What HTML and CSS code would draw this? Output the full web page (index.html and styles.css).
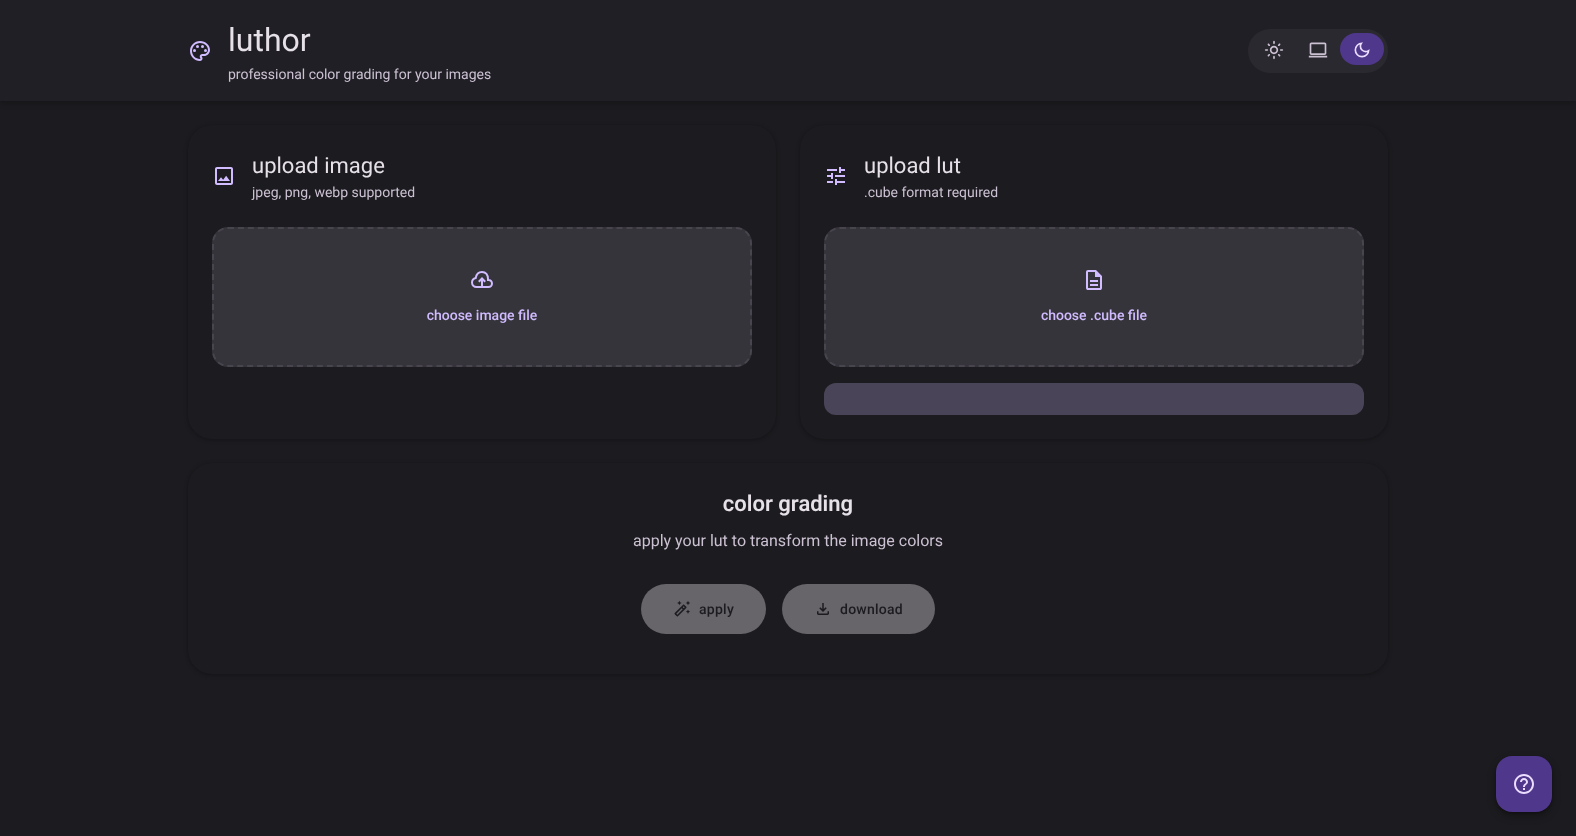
FILE: index.html
```html
<!DOCTYPE html>
<html>
  <head>
    <title>luthor</title>
    <link rel="stylesheet" href="styles.css">
  </head>
  <body>
    <header class="topbar">
      <div class="topbar-inner">
        <div class="brand">
          <svg class="icon icon-accent" viewBox="0 0 24 24"><path d="M12 22C6.49 22 2 17.51 2 12S6.49 2 12 2s10 4.04 10 9c0 3.31-2.69 6-6 6h-1.77c-.28 0-.5.22-.5.5 0 .12.05.23.13.33.41.47.64 1.06.64 1.67 0 1.38-1.12 2.5-2.5 2.5zm0-18c-4.41 0-8 3.59-8 8s3.59 8 8 8c.28 0 .5-.22.5-.5 0-.16-.08-.28-.14-.35-.41-.46-.63-1.05-.63-1.65 0-1.38 1.12-2.5 2.5-2.5H16c2.21 0 4-1.79 4-4 0-3.86-3.59-7-8-7z"/><circle cx="6.5" cy="11.5" r="1.5"/><circle cx="9.5" cy="7.5" r="1.5"/><circle cx="14.5" cy="7.5" r="1.5"/><circle cx="17.5" cy="11.5" r="1.5"/></svg>
          <div class="brand-text">
            <h1 class="brand-name">luthor</h1>
            <p class="brand-sub">professional color grading for your images</p>
          </div>
        </div>
        <div class="theme-switch">
          <button class="theme-btn">
            <svg class="icon-small" viewBox="0 0 24 24"><path d="M12 9c1.65 0 3 1.35 3 3s-1.35 3-3 3-3-1.35-3-3 1.35-3 3-3m0-2c-2.76 0-5 2.24-5 5s2.24 5 5 5 5-2.24 5-5-2.24-5-5-5zM2 13h2c.55 0 1-.45 1-1s-.45-1-1-1H2c-.55 0-1 .45-1 1s.45 1 1 1zm18 0h2c.55 0 1-.45 1-1s-.45-1-1-1h-2c-.55 0-1 .45-1 1s.45 1 1 1zM11 2v2c0 .55.45 1 1 1s1-.45 1-1V2c0-.55-.45-1-1-1s-1 .45-1 1zm0 18v2c0 .55.45 1 1 1s1-.45 1-1v-2c0-.55-.45-1-1-1s-1 .45-1 1zM5.99 4.58c-.39-.39-1.03-.39-1.41 0-.39.39-.39 1.03 0 1.41l1.06 1.06c.39.39 1.03.39 1.41 0s.39-1.03 0-1.41L5.99 4.58zm12.37 12.37c-.39-.39-1.03-.39-1.41 0-.39.39-.39 1.03 0 1.41l1.06 1.06c.39.39 1.03.39 1.41 0 .39-.39.39-1.03 0-1.41l-1.06-1.06zm1.06-10.96c.39-.39.39-1.03 0-1.41-.39-.39-1.03-.39-1.41 0l-1.06 1.06c-.39.39-.39 1.03 0 1.41s1.03.39 1.41 0l1.06-1.06zM7.05 18.36c.39-.39.39-1.03 0-1.41-.39-.39-1.03-.39-1.41 0l-1.06 1.06c-.39.39-.39 1.03 0 1.41s1.03.39 1.41 0l1.06-1.06z"/></svg>
          </button>
          <button class="theme-btn">
            <svg class="icon-small" viewBox="0 0 24 24"><path d="M1 21v-2h22v2H1Zm3-3q-.82 0-1.41-.59Q2 16.82 2 16V5q0-.82.59-1.41Q3.18 3 4 3h16q.82 0 1.41.59T22 5v11q0 .82-.59 1.41Q20.83 18 20 18H4Zm0-2h16V5H4v11Z"/></svg>
          </button>
          <button class="theme-btn theme-btn-on">
            <svg class="icon-small" viewBox="0 0 24 24"><path d="M12 21q-3.75 0-6.38-2.63Q3 15.75 3 12q0-3.75 2.63-6.38Q8.25 3 12 3q.35 0 .69.03.34.02.66.07-1.03.72-1.64 1.88Q11.1 6.15 11.1 7.5q0 2.25 1.58 3.82Q14.25 12.9 16.5 12.9q1.38 0 2.53-.61 1.15-.6 1.87-1.64.05.33.08.66.02.34.02.69 0 3.75-2.63 6.38Q15.75 21 12 21Zm0-2q2.2 0 3.95-1.21 1.75-1.22 2.55-3.17-.5.13-1 .2-.5.08-1 .08-3.08 0-5.24-2.16Q9.1 10.58 9.1 7.5q0-.5.08-1 .07-.5.2-1-1.95.8-3.17 2.55Q5 9.8 5 12q0 2.9 2.05 4.95Q9.1 19 12 19Z"/></svg>
          </button>
        </div>
      </div>
    </header>

    <main class="content">
      <div class="upload-row">
        <section class="card">
          <div class="card-head">
            <svg class="icon icon-accent" viewBox="0 0 24 24"><path d="M19 5v14H5V5h14m0-2H5c-1.1 0-2 .9-2 2v14c0 1.1.9 2 2 2h14c1.1 0 2-.9 2-2V5c0-1.1-.9-2-2-2zm-4.86 8.86l-3 3.87L9 13.14 6 17h12l-3.86-5.14z"/></svg>
            <div class="card-text">
              <h2 class="card-title">upload image</h2>
              <p class="card-sub">jpeg, png, webp supported</p>
            </div>
          </div>
          <div class="dropzone">
            <svg class="icon icon-accent icon-line" viewBox="0 0 24 24"><path d="M6.5 19C4 19 2 17 2 14.6c0-2.2 1.5-4 3.7-4.5C6.3 6.4 8.9 4 12 4c3.8 0 6 3 6 7v1h.5c2 0 3.5 1.6 3.5 3.5S20.5 19 18.5 19H6.5Z"/><path d="M12 19v-8.5M8.8 13.7l3.2-3.2 3.2 3.2"/></svg>
            <span class="dropzone-label">choose image file</span>
          </div>
        </section>

        <section class="card">
          <div class="card-head">
            <svg class="icon icon-accent" viewBox="0 0 24 24"><path d="M3 17v2h6v-2H3zM3 5v2h10V5H3zm10 16v-2h8v-2h-8v-2h-2v6h2zM7 9v2H3v2h4v2h2V9H7zm14 4v-2H11v2h10zm-6-4h2V7h4V5h-4V3h-2v6z"/></svg>
            <div class="card-text">
              <h2 class="card-title">upload lut</h2>
              <p class="card-sub">.cube format required</p>
            </div>
          </div>
          <div class="dropzone">
            <svg class="icon icon-accent" viewBox="0 0 24 24"><path d="M8 18h8v-2H8v2Zm0-4h8v-2H8v2Zm-2 8q-.82 0-1.41-.59Q4 20.82 4 20V4q0-.82.59-1.41Q5.18 2 6 2h8l6 6v12q0 .82-.59 1.41Q18.83 22 18 22H6Zm7-13V4H6v16h12V9h-5Z"/></svg>
            <span class="dropzone-label">choose .cube file</span>
          </div>
          <div class="lut-bar"></div>
        </section>
      </div>

      <section class="card grading">
        <h2 class="grading-title">color grading</h2>
        <p class="grading-sub">apply your lut to transform the image colors</p>
        <div class="grading-actions">
          <button class="pill">
            <svg class="icon-tiny" viewBox="0 0 24 24"><path d="M20 7l.94-2.06L23 4l-2.06-.94L20 1l-.94 2.06L17 4l2.06.94zM8.5 7l.94-2.06L11.5 4l-2.06-.94L8.5 1l-.94 2.06L5.5 4l2.06.94zM20 12.5l-.94 2.06L17 15.5l2.06.94L20 18.5l.94-2.06L23 15.5l-2.06-.94zM17.71 9.12l-2.83-2.83c-.2-.19-.45-.29-.71-.29-.26 0-.51.1-.71.29L2.29 17.46c-.39.39-.39 1.02 0 1.41l2.83 2.83c.2.2.45.3.71.3s.51-.1.71-.29l11.17-11.17c.39-.39.39-1.03 0-1.42zM14.17 8.42l1.41 1.41L14.41 11 13 9.59l1.17-1.17zM5.83 19.59l-1.41-1.41L11.59 11 13 12.41l-7.17 7.18z"/></svg>
            <span class="pill-label">apply</span>
          </button>
          <button class="pill">
            <svg class="icon-tiny" viewBox="0 0 24 24"><path d="M12 16l-5-5 1.4-1.45 2.6 2.6V4h2v8.15l2.6-2.6L17 11l-5 5zM6 20c-.55 0-1.02-.2-1.41-.59C4.2 19.02 4 18.55 4 18v-3h2v3h12v-3h2v3c0 .55-.2 1.02-.59 1.41-.39.39-.86.59-1.41.59H6z"/></svg>
            <span class="pill-label">download</span>
          </button>
        </div>
      </section>
    </main>

    <button class="help-fab">
      <svg class="icon" viewBox="0 0 24 24"><path d="M11 18h2v-2h-2v2zm1-16C6.48 2 2 6.48 2 12s4.48 10 10 10 10-4.48 10-10S17.52 2 12 2zm0 18c-4.41 0-8-3.59-8-8s3.59-8 8-8 8 3.59 8 8-3.59 8-8 8zm0-14c-2.21 0-4 1.79-4 4h2c0-1.1.9-2 2-2s2 .9 2 2c0 2-3 1.75-3 5h2c0-2.25 3-2.5 3-5 0-2.21-1.79-4-4-4z"/></svg>
    </button>
  </body>
</html>
```
FILE: styles.css
```css
* {
  box-sizing: border-box;
}
body {
  margin: 0;
  min-height: 836px;
  background-color: #1c1b1f;
  color: #e6e0e9;
  font-family: Roboto, "Liberation Sans", sans-serif;
  text-rendering: geometricPrecision;
  overflow: hidden;
}
h1,
h2,
p {
  margin: 0;
  font-weight: 400;
}
button {
  border: none;
  font-family: inherit;
  text-rendering: inherit;
}
svg {
  fill: currentColor;
  flex-shrink: 0;
}
.icon {
  width: 24px;
  height: 24px;
}
.icon-small {
  width: 20px;
  height: 20px;
}
.icon-tiny {
  width: 18px;
  height: 18px;
}
.icon-accent {
  color: #d0bcff;
}
.icon-line {
  fill: none;
  stroke: currentColor;
  stroke-width: 2;
}

/* top bar */
.topbar {
  height: 101px;
  background-color: #211f26;
  box-shadow: 0 2px 6px rgba(0, 0, 0, 0.25);
}
.topbar-inner {
  width: 1200px;
  height: 100%;
  margin: 0 auto;
  display: flex;
  align-items: center;
  justify-content: space-between;
  will-change: transform;
}
.brand {
  display: flex;
  align-items: center;
  gap: 16px;
}
.brand-text {
  padding-top: 4px;
}
.brand-name {
  font-size: 32px;
  line-height: 40px;
  margin-bottom: 5px;
}
.brand-sub {
  font-size: 14px;
  line-height: 20px;
  color: #cbc1d2;
}
.theme-switch {
  display: flex;
  align-items: flex-start;
  height: 44px;
  padding: 4px;
  border-radius: 22px;
  background-color: #2b2930;
}
.theme-btn {
  width: 44px;
  height: 32px;
  padding: 2px 0 0;
  display: flex;
  align-items: center;
  justify-content: center;
  border-radius: 16px;
  background: none;
  color: #cbc1d2;
}
.theme-btn-on {
  background-color: #4f378b;
  color: #eaddff;
}

/* cards */
.content {
  width: 1200px;
  margin: 24px auto 0;
  display: flex;
  flex-direction: column;
  gap: 24px;
  will-change: transform;
}
.upload-row {
  display: grid;
  grid-template-columns: 1fr 1fr;
  gap: 24px;
}
.card {
  padding: 24px;
  border-radius: 24px;
  background-color: #1c1b1f;
  box-shadow: 0 1px 4px rgba(0, 0, 0, 0.3);
}
.card-head {
  display: flex;
  align-items: center;
  gap: 16px;
  height: 54px;
  margin-bottom: 24px;
}
.card-text {
  padding-top: 4px;
}
.card-title {
  font-size: 22px;
  line-height: 28px;
  margin-bottom: 2px;
}
.card-sub {
  font-size: 14px;
  line-height: 20px;
  color: #cbc1d2;
}
.dropzone {
  height: 140px;
  display: flex;
  flex-direction: column;
  align-items: center;
  justify-content: center;
  gap: 14px;
  border: 2px dashed #49454f;
  border-radius: 16px;
  background-color: #36343b;
}
.dropzone-label {
  font-size: 14px;
  line-height: 20px;
  font-weight: 500;
  color: #d0bcff;
}
.lut-bar {
  height: 32px;
  margin-top: 16px;
  border-radius: 12px;
  background-color: #4a4458;
}

/* color grading */
.grading {
  height: 211px;
  padding-top: 28px;
  text-align: center;
}
.grading-title {
  font-size: 22px;
  line-height: 28px;
  font-weight: 600;
  margin-bottom: 10px;
}
.grading-sub {
  font-size: 16px;
  line-height: 24px;
  color: #cbc1d2;
}
.grading-actions {
  display: flex;
  justify-content: center;
  gap: 16px;
  margin-top: 31px;
}
.pill {
  height: 50px;
  padding: 0 32px;
  display: flex;
  align-items: center;
  gap: 8px;
  border-radius: 25px;
  background-color: #676569;
  color: #1c1b1f;
  font-size: 14px;
  font-weight: 500;
  letter-spacing: 0.25px;
}
.pill-label {
  padding-top: 1px;
}

/* help button, sits over the page */
.help-fab {
  position: fixed;
  right: 24px;
  bottom: 24px;
  width: 56px;
  height: 56px;
  padding: 0;
  display: flex;
  align-items: center;
  justify-content: center;
  border-radius: 16px;
  background-color: #4f378b;
  color: #eaddff;
  box-shadow: 0 4px 8px rgba(0, 0, 0, 0.3), 0 1px 3px rgba(0, 0, 0, 0.3);
}
```
